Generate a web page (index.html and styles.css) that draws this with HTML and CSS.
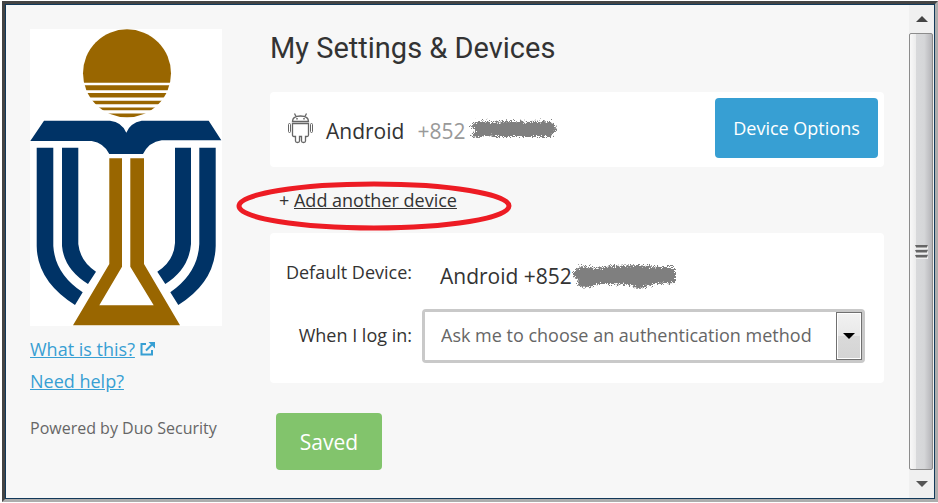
FILE: index.html
```html
<!DOCTYPE html>
<html lang="en">
<head>
    <meta charset="UTF-8">
    <meta name="viewport" content="width=device-width, initial-scale=1">
    <title>My Settings &amp; Devices</title>
    <link rel="stylesheet" href="styles.css">
</head>
<body>
<div class="window">
    <div class="page">
        <aside class="sidebar">
            <svg class="logo" viewBox="30 29 192 297" role="img" aria-label="University logo">
                <!-- sun -->
                <circle cx="127" cy="73.3" r="44" fill="#996600"/>
                <path fill="#fff" d="M80 82.7h94v2.6H80zM80 90.3h94v2.8H80zM80 97.5h94v3.3H80zM80 104.3h94v3.2H80zM80 110.3h94v3.2H80z"/>
                <!-- book and pillars -->
                <g fill="#003366">
                    <path d="M44 120.7H110Q122 122 126.3 132.7Q130 123 141.7 120.7H208.7L221.3 140.3H161.7Q149 142 143 154H109.3Q104 143 91.7 141H30.3Z"/>
                    <path d="M36.7 147.7H53.3V246Q55 274 82.7 292.3L75 305Q37 281 36.7 246Z"/>
                    <path d="M62 147.7H78.3V244Q80 261 96 271.7L88 284Q64 269 62 246Z"/>
                    <path d="M191 147.7H175V243Q174 261 157.3 271.7L165.3 284Q189 269 191 244Z"/>
                    <path d="M215.7 147.7H199.3V244Q198 273 170.3 292.3L178.3 305Q215 282 215.7 246Z"/>
                </g>
                <!-- flask -->
                <path fill="#996600" fill-rule="evenodd" d="M109.3 158.3H122V266.7L99.3 305.3H153.7L130.3 266.7V158.3H144V264L180 325.3H73L109.3 264Z"/>
            </svg>
            <p class="help"><a href="#">What is this?</a>
                <svg class="external" viewBox="0 0 15 14" aria-hidden="true">
                    <path d="M6 2H1.5V12.5H12V8" fill="none" stroke="#379fd3" stroke-width="2"/>
                    <path d="M6 8.5L12 2.5" stroke="#379fd3" stroke-width="2"/>
                    <path d="M8.5 0H15V6.5Z" fill="#379fd3"/>
                </svg>
            </p>
            <p class="help"><a href="#">Need help?</a></p>
            <p class="powered">Powered by Duo Security</p>
        </aside>
        <main class="content">
            <h1>My Settings &amp; Devices</h1>
            <section class="card device">
                <svg class="android" viewBox="0 0 25 31" fill="none" stroke="#666" aria-hidden="true">
                    <path stroke-width="1.3" d="M4.5 8.5Q4.5 3 12.5 3T20.5 8.5ZM8 3.5L6.5 .5M17 3.5L18.5 .5"/>
                    <path stroke-width="1.3" d="M4.5 10.5H20.5V22Q20.5 23.5 19 23.5H17.5V28Q17.5 29.5 15.5 29.5T13.5 28V23.5H11.5V28Q11.5 29.5 9.5 29.5T7.5 28V23.5H6Q4.5 23.5 4.5 22Z"/>
                    <rect x=".5" y="10.5" width="2" height="9" rx="1"/>
                    <rect x="22.5" y="10.5" width="2" height="9" rx="1"/>
                    <path stroke-width="1.5" d="M9 5V6.5M16 5V6.5"/>
                </svg>
                <span class="name">Android</span>
                <span class="number">+852</span>
                <svg class="scribble" viewBox="0 0 88 20" aria-hidden="true">
                    <defs>
                        <filter id="spray" x="-10%" y="-20%" width="120%" height="140%">
                            <feTurbulence type="fractalNoise" baseFrequency="1.7" numOctaves="3" seed="4"/>
                            <feDisplacementMap in="SourceGraphic" scale="9" xChannelSelector="R" yChannelSelector="G"/>
                        </filter>
                    </defs>
                    <path filter="url(#spray)" fill="#7f7f7f" d="M2 7L8 3L22 4L42 3L60 4L82 3L88 11L82 19L66 19L54 19L40 19L26 19L16 18L9 20L2 18L6 13Z"/>
                </svg>
                <button type="button" class="options">Device Options</button>
            </section>
            <p class="add"><span>+</span> <a href="#">Add another device</a>
                <svg class="marker" viewBox="0 0 276 50" aria-hidden="true">
                    <ellipse cx="138" cy="25" rx="135" ry="22" fill="none" stroke="#ed1c24" stroke-width="5"/>
                </svg>
            </p>
            <section class="card settings">
                <span class="label">Default Device:</span>
                <span class="default">Android +852
                    <svg class="scribble wide" viewBox="0 0 104 25" aria-hidden="true">
                        <path filter="url(#spray)" fill="#7f7f7f" d="M1 8L8 2L24 4L40 2L66 1L88 3L103 3L103 19L84 20L76 22L66 25L58 21L40 20L24 20L14 24L5 21L7 16L1 12Z"/>
                    </svg>
                </span>
                <label class="label" for="login">When I log in:</label>
                <span class="picker">
                    <select id="login">
                        <option>Ask me to choose an authentication method</option>
                    </select>
                    <span class="arrow"></span>
                </span>
            </section>
            <button type="button" class="saved">Saved</button>
        </main>
    </div>
    <div class="scrollbar" aria-hidden="true">
        <div class="step"><svg viewBox="0 0 12 6"><path d="M0 6L6 0L12 6Z" fill="#444"/></svg></div>
        <div class="thumb"><i></i><i></i><i></i></div>
        <div class="step"><svg viewBox="0 0 12 6"><path d="M0 0H12L6 6Z" fill="#555"/></svg></div>
    </div>
</div>
</body>
</html>
```
FILE: styles.css
```css
*{
    box-sizing: border-box;
}
body{
    margin: 0;
    padding: 1px 0 1px 2px;
    min-height: 100vh;
    display: flex;
    background-color: white;
    font-family: "Open Sans", sans-serif;
    font-size: 18px;
    line-height: 32px;
    color: #333;
}
h1, p{
    margin: 0;
}
button, select{
    font: inherit;
}
.window{
    flex: 1;
    display: flex;
    border: 3px solid;
    border-color: #444 #adadad #adadad #444;
    background-color: #f7f7f7;
    outline: 1px solid #12395a;
    outline-offset: -4px;
    padding: 1px;
}
.page{
    flex: 1;
    display: flex;
    gap: 47px;
    padding: 24px 25px 20px 24px;
}
.sidebar{
    width: 193px;
    flex: none;
}
.logo{
    display: block;
    width: 192px;
    height: 297px;
    background-color: white;
    margin-bottom: 7px;
}
.help a{
    color: #379fd3;
}
.external{
    width: 15px;
    height: 14px;
}
.powered{
    margin-top: 15px;
    font-size: 16px;
    white-space: nowrap;
    color: #666;
}
.content{
    flex: 1;
}
h1{
    font-family: Roboto, sans-serif;
    font-size: 29px;
    font-weight: 400;
    line-height: 39px;
    margin-bottom: 24px;
}
.card{
    background-color: white;
    border-radius: 4px;
}
.device{
    display: flex;
    align-items: center;
    padding: 6px 6px 9px 18px;
    font-size: 21px;
}
.android{
    width: 25px;
    height: 31px;
}
.name{
    margin: 6px 13px 0;
}
.number{
    margin: 6px 4px 0 0;
    color: #999;
}
.scribble{
    width: 88px;
    height: 20px;
}
.options{
    margin-left: auto;
    width: 163px;
    height: 60px;
    border: 0;
    border-radius: 4px;
    background-color: #379fd3;
    color: white;
    font-size: 18px;
}
.add{
    position: relative;
    margin: 17px 0;
    padding-left: 9px;
}
.add a{
    color: #333;
}
/* red ring drawn round the link */
.marker{
    position: absolute;
    left: -34px;
    top: -3px;
    width: 276px;
    height: 50px;
}
.settings{
    display: grid;
    grid-template-columns: 142px 1fr;
    column-gap: 10px;
    align-items: center;
    padding: 23px 19px 20px 0;
}
.label{
    text-align: right;
    padding-bottom: 2px;
}
.default{
    display: flex;
    align-items: center;
    padding: 4px 0 17px 18px;
    font-size: 21px;
}
.wide{
    width: 104px;
    height: 25px;
}
.settings .label:first-child{
    padding-bottom: 21px;
}
.picker{
    position: relative;
    display: flex;
    border: 3px solid #c9c9c9;
    border-radius: 4px;
}
.picker select{
    flex: 1;
    min-width: 0;
    height: 48px;
    padding: 0 30px 2px 16px;
    border: 0;
    appearance: none;
    background-color: white;
    color: #666;
}
.arrow{
    position: absolute;
    right: 0;
    top: 0;
    bottom: 0;
    width: 26px;
    border: 1px solid #707070;
    box-shadow: inset 0 0 0 1px white;
    background: linear-gradient(#f2f2f2, #e8e8e8 50%, #dadada 50%, #d4d4d4);
    pointer-events: none;
}
.arrow::after{
    content: "";
    position: absolute;
    left: 6px;
    top: 20px;
    border: 6px solid transparent;
    border-top-color: black;
    border-bottom: 0;
}
.saved{
    display: block;
    margin: 30px 0 0 6px;
    width: 106px;
    height: 57px;
    border: 0;
    border-radius: 4px;
    background-color: #82c46c;
    color: white;
    font-size: 21px;
}
.scrollbar{
    width: 25px;
    display: flex;
    flex-direction: column;
    background-color: #f0f0f0;
}
.step{
    height: 28px;
    display: flex;
    align-items: center;
    justify-content: center;
}
.step svg{
    width: 12px;
    height: 6px;
}
.thumb{
    flex: 1;
    display: flex;
    flex-direction: column;
    align-items: center;
    justify-content: center;
    gap: 1px;
    margin-right: 1px;
    border: 1px solid #8c8c8c;
    border-radius: 2px;
    background: linear-gradient(to right, #f8f8f8, #ececec 27%, #d8d9db 28%, #d5d6d8 65%, #b4b4b8);
}
.thumb i{
    width: 13px;
    height: 4px;
    border: 1px solid #eee;
    border-top: 2px solid #666;
    background-color: #aaa;
}
```
